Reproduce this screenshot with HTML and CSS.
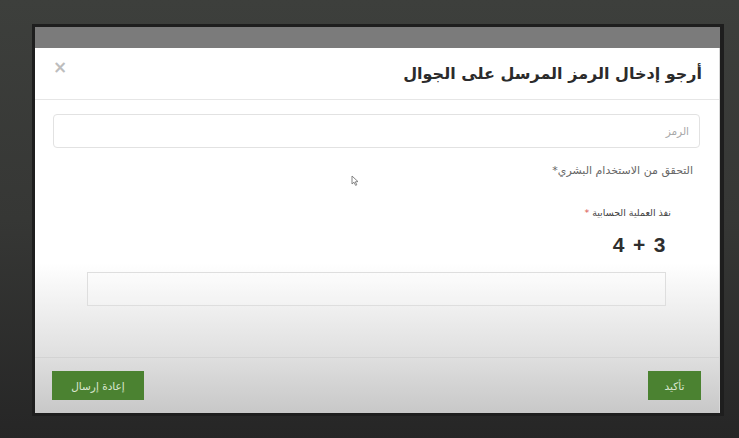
FILE: index.html
```html
<!DOCTYPE html>
<html lang="ar">
<head>
<meta charset="utf-8">
<title>رمز التحقق</title>
<link rel="stylesheet" href="styles.css">
</head>
<body>
<div class="frame">
  <div class="topbar"></div>
  <div class="modal" dir="rtl">
    <div class="modal-header">
      <h4 class="modal-title">أرجو إدخال الرمز المرسل على الجوال</h4>
      <span class="close">×</span>
    </div>
    <div class="modal-body">
      <div class="field"><span class="placeholder">الرمز</span></div>
      <p class="human">التحقق من الاستخدام البشري*</p>
      <div class="captcha">
        <p class="captcha-label">نفذ العملية الحسابية <span class="req">*</span></p>
        <div class="math"><span class="eq" dir="ltr">4 + 3</span></div>
        <div class="field answer"></div>
      </div>
      <svg class="cursor" width="8" height="11" viewBox="0 0 8 11"><path d="M1 1 L1 9 L3 7.2 L4.6 10.4 L5.8 9.8 L4.3 6.8 L7 6.6 Z" fill="#fff" stroke="#777" stroke-width="0.9" stroke-linejoin="round"/></svg>
    </div>
    <div class="modal-footer">
      <button class="btn">تأكيد</button>
      <button class="btn">إعادة إرسال</button>
    </div>
  </div>
</div>
</body>
</html>
```

FILE: styles.css
```css
html, body {
  margin: 0;
  padding: 0;
}
body {
  width: 739px;
  height: 438px;
  overflow: hidden;
  background: linear-gradient(to bottom, #3d3f3c 0%, #363735 50%, #262626 100%);
  font-family: "DejaVu Sans", "Liberation Sans", sans-serif;
}
.frame {
  box-sizing: border-box;
  margin: 24px 0 0 32px;
  width: 692px;
  height: 392px;
  border: 3px solid #1e1e1e;
  border-right-width: 4px;
  display: flex;
  flex-direction: column;
}
.topbar {
  height: 21px;
  background: #7b7b7b;
}
.modal {
  flex: 1;
  position: relative;
  display: flex;
  flex-direction: column;
  border-right: 1px solid #d8d8d8;
  background: linear-gradient(to bottom, #ffffff 0px, #ffffff 215px, #ececec 270px, #dfdfdf 309px, #d6d6d6 330px, #c8c8c8 365px);
}
.modal-header {
  height: 52px;
  box-sizing: border-box;
  border-bottom: 1px solid #e6e6e6;
  display: flex;
  align-items: center;
  justify-content: space-between;
  padding: 0 17px 0 18px;
}
.modal-title {
  margin: 0;
  font-size: 16px;
  font-weight: bold;
  color: #2b2b2b;
}
.close {
  font-size: 17px;
  color: #bdbdbd;
  font-weight: bold;
  line-height: 1;
  margin-top: -12px;
}
.modal-body {
  flex: 1;
  padding: 14px 19px 0 18px;
}
.field {
  box-sizing: border-box;
  height: 34px;
  border: 1px solid #e2e2e2;
  border-radius: 4px;
  display: flex;
  align-items: center;
  padding: 0 10px;
}
.placeholder {
  font-size: 10.5px;
  color: #a8a8a8;
}
.human {
  margin: 16px 7px 0 0;
  font-size: 11px;
  color: #666;
}
.captcha {
  padding: 0 34px 0 34px;
}
.captcha-label {
  margin: 30px -5px 0 0;
  font-size: 9.5px;
  color: #444;
}
.req {
  color: #d9534f;
}
.math {
  margin-top: 15px;
  height: 26px;
}
.eq {
  display: inline-block;
  direction: ltr;
  unicode-bidi: isolate;
  font-family: "Liberation Sans", sans-serif;
  font-weight: bold;
  font-size: 21px;
  color: #2e2e2e;
  letter-spacing: 0.6px;
  word-spacing: 1.5px;
}
.answer {
  margin-top: 13px;
  border-radius: 0;
  border-color: #dedede;
  background: rgba(255,255,255,0.15);
}
.cursor {
  position: absolute;
  left: 316px;
  top: 127px;
}
.modal-footer {
  height: 56px;
  box-sizing: border-box;
  border-top: 1px solid #d3d3d3;
  display: flex;
  justify-content: space-between;
  align-items: flex-start;
  padding: 13px 18px 0 17px;
}
.btn {
  height: 29px;
  border: none;
  border-radius: 0;
  background: #4b8231;
  color: #dbe8d2;
  font-family: "DejaVu Sans", "Liberation Sans", sans-serif;
  font-size: 10.5px;
  padding: 0;
}
.btn:first-child {
  width: 53px;
}
.btn:last-child {
  width: 92px;
}
```
